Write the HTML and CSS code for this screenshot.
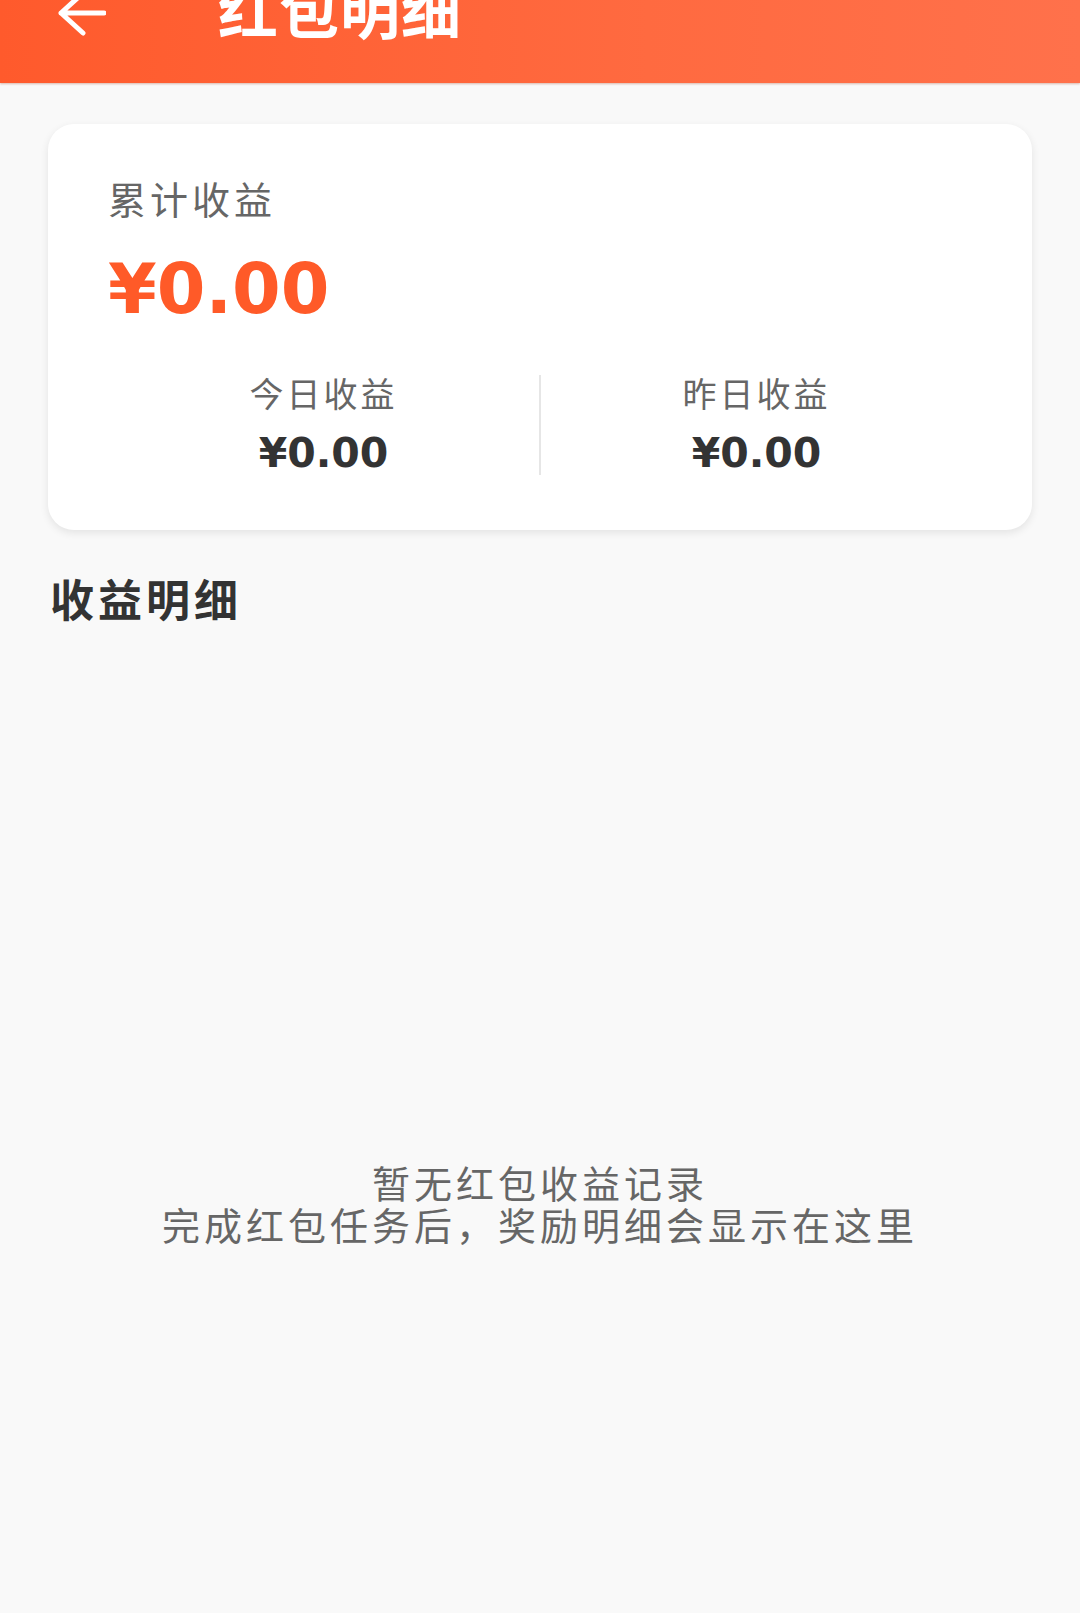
FILE: index.html
```html
<!DOCTYPE html>
<html lang="zh-CN">
<head>
<meta charset="utf-8">
<title>红包明细</title>
<link rel="stylesheet" href="styles.css">
</head>
<body>
  <header class="topbar">
    <svg class="back" width="50" height="46" viewBox="0 0 50 46" aria-hidden="true">
      <path d="M48 23H5M27 3L5 23l22 20" fill="none" stroke="#fff" stroke-width="5" stroke-linecap="round" stroke-linejoin="round"/>
    </svg>
    <h1 class="title">红包明细</h1>
  </header>

  <main class="page">
    <section class="card">
      <div class="total-label">累计收益</div>
      <div class="total-amount">¥0.00</div>
      <div class="stats">
        <div class="stat">
          <div class="stat-label">今日收益</div>
          <div class="stat-value">¥0.00</div>
        </div>
        <div class="divider"></div>
        <div class="stat">
          <div class="stat-label">昨日收益</div>
          <div class="stat-value">¥0.00</div>
        </div>
      </div>
    </section>

    <h2 class="section-title">收益明细</h2>

    <div class="empty">
      <p class="empty-line">暂无红包收益记录</p>
      <p class="empty-line">完成红包任务后，奖励明细会显示在这里</p>
    </div>
  </main>
</body>
</html>
```

FILE: styles.css
```css
html, body {
  margin: 0;
  padding: 0;
}

body {
  background: #f9f9f9;
  font-family: "Noto Sans CJK SC", "Noto Sans", sans-serif;
  width: 1080px;
  min-height: 1613px;
}

.topbar {
  height: 83px;
  box-sizing: border-box;
  background: linear-gradient(90deg, #ff5a2c 0%, #ff6a40 60%, #ff714b 100%);
  display: flex;
  align-items: flex-start;
  padding-left: 56px;
  overflow: hidden;
  box-shadow: 0 1px 2px rgba(160, 60, 30, 0.35);
}

.back {
  flex: none;
  margin-top: -10px;
}

.title {
  margin: -22px 0 0 112px;
  font-size: 60px;
  line-height: 60px;
  font-weight: 700;
  color: #fff;
  letter-spacing: 1px;
}

.page {
  padding: 0 48px;
}

.card {
  margin-top: 41px;
  background: #fff;
  border-radius: 26px;
  box-shadow: 0 3px 8px rgba(0, 0, 0, 0.09);
  padding: 55px 60px 55px;
}

.total-label {
  font-size: 38px;
  line-height: 38px;
  letter-spacing: 4px;
  color: #666;
}

.total-amount {
  margin-top: 37px;
  font-family: "DejaVu Sans", sans-serif;
  font-weight: 700;
  font-size: 70px;
  line-height: 71px;
  color: #ff5a28;
}

.stats {
  margin-top: 50px;
  display: flex;
  align-items: center;
}

.stat {
  flex: 1;
  display: flex;
  flex-direction: column;
  align-items: center;
}

.stat-label {
  font-size: 34px;
  line-height: 34px;
  letter-spacing: 3px;
  color: #666;
}

.stat-value {
  margin-top: 23px;
  font-family: "DejaVu Sans", sans-serif;
  font-weight: 700;
  font-size: 41px;
  line-height: 41px;
  color: #333;
}

.divider {
  width: 2px;
  height: 100px;
  background: #e6e6e6;
  flex: none;
}

.section-title {
  margin: 46px 0 0 2px;
  font-size: 44px;
  line-height: 44px;
  letter-spacing: 4px;
  font-weight: 700;
  color: #333;
}

.empty {
  padding-top: 541px;
  text-align: center;
}

.empty-line {
  margin: 0;
  font-size: 38px;
  line-height: 42px;
  letter-spacing: 4px;
  color: #666;
}
```
